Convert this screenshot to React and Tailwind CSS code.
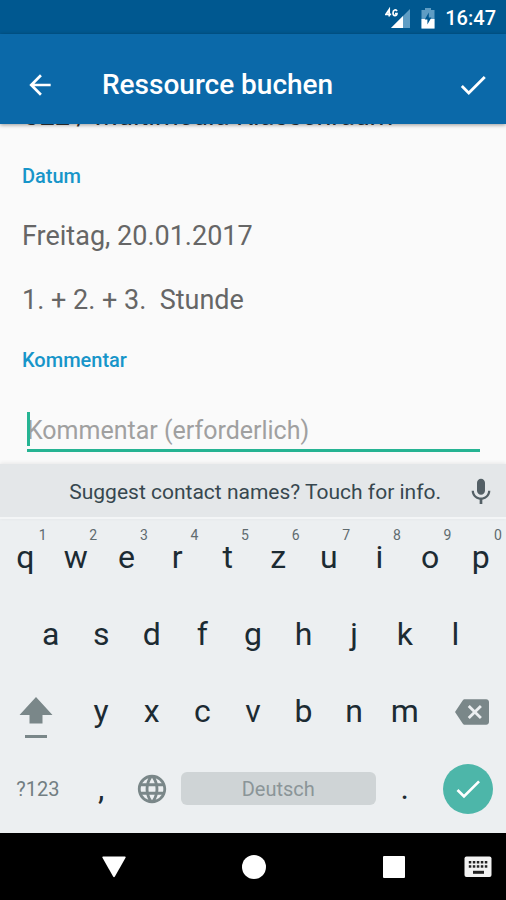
import { MdArrowBack, MdBackspace, MdCheck, MdLanguage, MdMic } from "react-icons/md";

const TOP_ROW = ["q", "w", "e", "r", "t", "z", "u", "i", "o", "p"];
const HOME_ROW = ["a", "s", "d", "f", "g", "h", "j", "k", "l"];
const BOTTOM_ROW = ["y", "x", "c", "v", "b", "n", "m"];

function SignalIcon() {
  return (
    <svg viewBox="0 0 26 22" fill="none" className="h-[22px] w-[26px]">
      <path d="M25 2V21H6Z" fill="#5f9dc4" />
      <path d="M18 9V21H6Z" fill="#fff" />
      <path
        d="M4.2 9.5V2.5L1 7.3H6.2M12 4C11.2 2.4 8 2.4 8 6C8 9.6 12 9.4 12 6.6H10"
        stroke="#fff"
        strokeWidth="1.7"
      />
    </svg>
  );
}

function BatteryIcon() {
  return (
    <svg viewBox="0 0 14 22" fill="none" className="h-[22px] w-[14px]">
      <path d="M4 1H10V3H13.5V21.5H0.5V3H4Z" fill="#5f9dc4" />
      <path d="M0.5 12H13.5V21.5H0.5Z" fill="#fff" />
      <path d="M7.8 5.5L3.8 12.5H6.4V17.5L10.4 10.5H7.8Z" fill="#005890" />
    </svg>
  );
}

function ShiftIcon() {
  return (
    <svg viewBox="0 0 34 42" fill="#7a8789" className="h-[42px] w-[34px]">
      <path d="M17 0L33.5 18H23.5V26.5H10.5V18H0.5Z" />
      <rect x="6" y="38" width="22" height="3" />
    </svg>
  );
}

function KeyboardIcon() {
  return (
    <svg viewBox="0 0 28 22" className="h-[22px] w-7">
      <rect x="0.5" y="0.5" width="27" height="20.5" rx="2" fill="#f2f2f2" />
      {[4.8, 8.8, 12.8, 16.8, 20.8].map((x) => (
        <g key={x} fill="#222">
          <rect x={x} y="5" width="2.5" height="2.5" />
          <rect x={x} y="9.2" width="2.5" height="2.5" />
        </g>
      ))}
      <rect x="9" y="14.8" width="11" height="3" fill="#222" />
    </svg>
  );
}

function Key({ label, hint }) {
  return (
    <button type="button" className="relative w-1/10 text-[32px] leading-[77px] text-[#1c2b33]">
      {label}
      {hint ? (
        <span className="absolute top-2 right-1 text-[14px] leading-4 text-[#5f6b6f]">{hint}</span>
      ) : null}
    </button>
  );
}

function StatusBar() {
  return (
    <div className="flex h-[34px] items-center justify-end bg-[#005890] pt-[2px] pr-[10px] text-white">
      <SignalIcon />
      <span className="ml-[10px]">
        <BatteryIcon />
      </span>
      <span className="ml-[10px] text-[20px] font-medium leading-6">16:47</span>
    </div>
  );
}

function AppBar() {
  return (
    <header className="relative flex h-[90px] items-center bg-[#0b69a9] px-5 pt-3 text-white shadow-[0_1px_4px_rgba(0,0,0,0.4)]">
      <button type="button" aria-label="Zurück">
        <MdArrowBack className="h-10 w-10 p-1" />
      </button>
      <h1 className="ml-[42px] flex-1 text-[28px] font-medium leading-8">Ressource buchen</h1>
      <button type="button" aria-label="Speichern" className="-mr-1">
        <MdCheck className="h-[34px] w-[34px]" />
      </button>
    </header>
  );
}

function BookingForm() {
  return (
    <main className="bg-[#fafafa] px-[22px] pb-3 text-[27px] leading-8 text-[#666]">
      {/* the resource name is scrolled up under the app bar */}
      <div className="flex h-2 items-end overflow-hidden text-[#333]">
        <p>C22 / Multimedia Klassenraum</p>
      </div>
      <h2 className="mt-8 text-[20px] font-medium leading-6 text-[#1795c9]">Datum</h2>
      <p className="mt-8">Freitag, 20.01.2017</p>
      <p className="mt-8 whitespace-pre">1. + 2. + 3.  Stunde</p>
      <label htmlFor="comment" className="mt-8 block text-[20px] font-medium leading-6 text-[#1795c9]">
        Kommentar
      </label>
      <div className="relative ml-[5px] mr-1 mt-8">
        <input
          id="comment"
          type="text"
          placeholder="Kommentar (erforderlich)"
          className="block h-12 w-full border-b-[3px] border-[#26b493] pt-2 text-[25px] outline-none placeholder:text-[#a0a0a0]"
        />
        <span className="absolute top-2 left-0 h-[34px] w-[3px] bg-[#26b493]" />
      </div>
    </main>
  );
}

function SuggestionBar() {
  return (
    <div className="flex h-[55px] items-center justify-end border-b-2 border-[#f3f5f6] bg-[#e4e7e9] pt-[2px] pr-[9px] shadow-[0_-1px_4px_rgba(0,0,0,0.08)]">
      <button type="button" className="text-[21px] leading-8 text-[#37474f]">
        Suggest contact names? Touch for info.
      </button>
      <button type="button" aria-label="Spracheingabe" className="ml-6 text-[#546066]">
        <MdMic className="h-8 w-8" />
      </button>
    </div>
  );
}

function Keyboard() {
  return (
    <section className="bg-[#eceff1] pb-[6px]">
      <SuggestionBar />
      <div className="flex">
        {TOP_ROW.map((label, i) => (
          <Key key={label} label={label} hint={String((i + 1) % 10)} />
        ))}
      </div>
      <div className="flex justify-center">
        {HOME_ROW.map((label) => (
          <Key key={label} label={label} />
        ))}
      </div>
      <div className="flex">
        <button type="button" aria-label="Umschalt" className="flex w-3/20 items-center justify-center pt-3 pr-1">
          <ShiftIcon />
        </button>
        {BOTTOM_ROW.map((label) => (
          <Key key={label} label={label} />
        ))}
        <button type="button" aria-label="Löschen" className="flex w-3/20 items-center justify-center pl-2 text-[#7a8789]">
          <MdBackspace className="h-[34px] w-[34px]" />
        </button>
      </div>
      <div className="flex">
        <button type="button" className="w-3/20 text-[20px] text-[#727e82]">
          ?123
        </button>
        <Key label="," />
        <button type="button" aria-label="Sprache" className="flex w-1/10 items-center justify-center text-[#7a8789]">
          <MdLanguage className="h-[34px] w-[34px]" />
        </button>
        <button type="button" className="mx-1 my-[22px] flex-1 rounded-md bg-[#cfd4d6] text-[20px] text-[#8b9598]">
          Deutsch
        </button>
        <Key label="." />
        <div className="flex w-3/20 items-center justify-center">
          <button
            type="button"
            aria-label="Fertig"
            className="flex h-[50px] w-[50px] items-center justify-center rounded-full bg-[#4db6a9] text-white"
          >
            <MdCheck className="h-8 w-8" />
          </button>
        </div>
      </div>
    </section>
  );
}

function NavBar() {
  return (
    <nav className="grid h-[67px] grid-cols-[44px_1fr_1fr_1fr_42px] items-center bg-black text-white">
      <button type="button" aria-label="Zurück" className="col-start-2 flex justify-center">
        <svg viewBox="0 0 24 24" fill="currentColor" className="h-6 w-6">
          <path d="M1.2 1.5H22.8Q24.2 1.5 23.4 3L12.9 21.6Q12 23 11.1 21.6L0.6 3Q-0.2 1.5 1.2 1.5Z" />
        </svg>
      </button>
      <button type="button" aria-label="Startseite" className="flex justify-center">
        <span className="h-6 w-6 rounded-full bg-white" />
      </button>
      <button type="button" aria-label="Übersicht" className="flex justify-center">
        <span className="h-[22px] w-[22px] rounded-[1px] bg-white" />
      </button>
      <button type="button" aria-label="Tastatur wechseln" className="flex">
        <KeyboardIcon />
      </button>
    </nav>
  );
}

export default function App() {
  return (
    <div className="min-h-screen bg-black font-['Roboto',sans-serif]">
      <StatusBar />
      <AppBar />
      <BookingForm />
      <Keyboard />
      <NavBar />
    </div>
  );
}
